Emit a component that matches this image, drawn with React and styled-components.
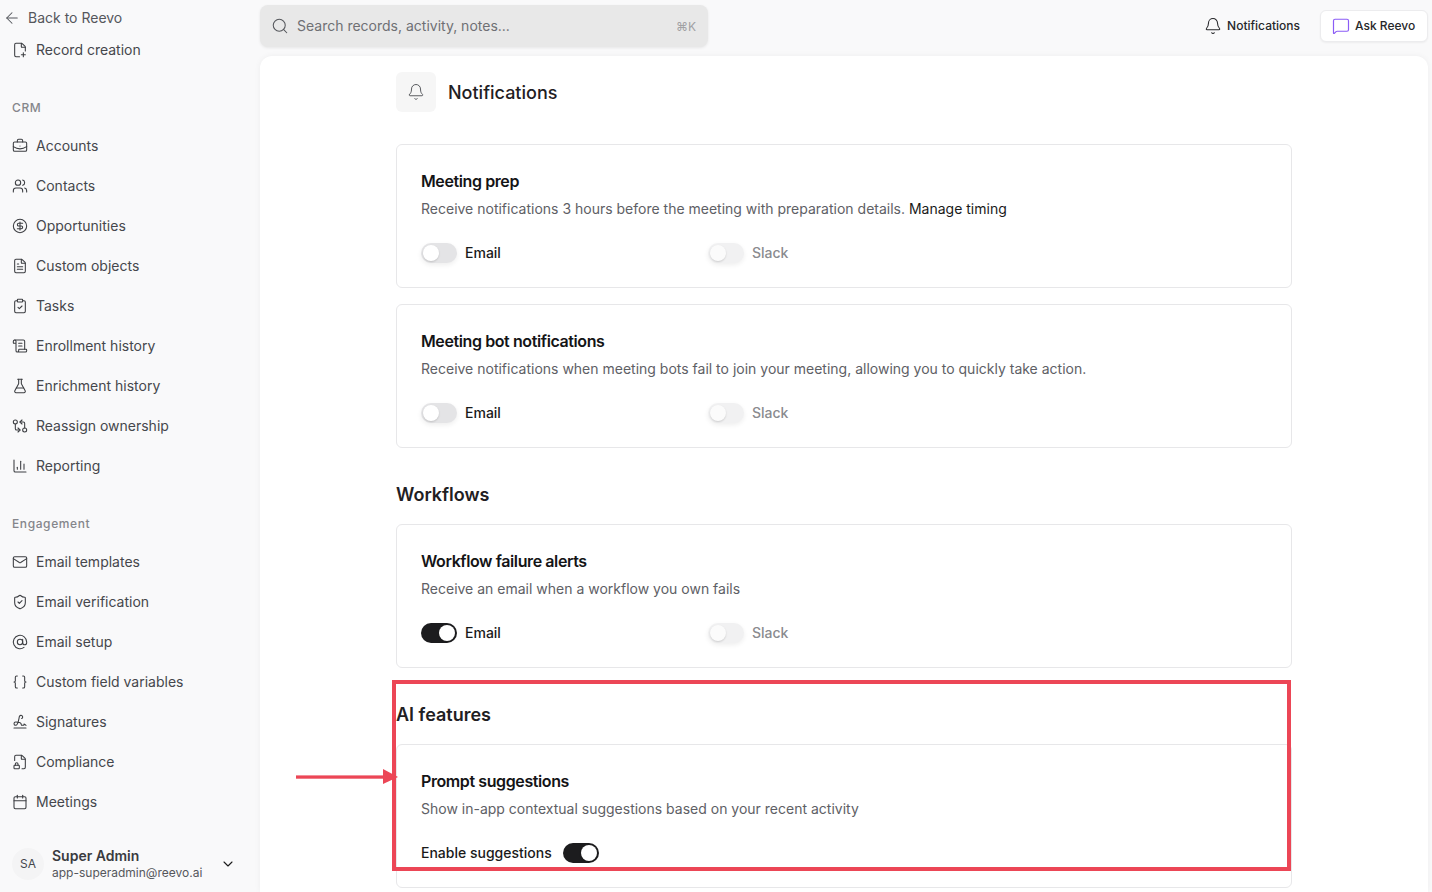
import React from "react";
import styled, { createGlobalStyle } from "styled-components";
import {
  ArrowLeft, FilePlus2, BriefcaseBusiness, Users, CircleDollarSign, FileText, ClipboardCheck,
  ScrollText, FlaskConical, GitCompareArrows, ChartColumn, Mail, ShieldCheck, AtSign, Braces,
  Signature, FileLock2, Calendar, ChevronDown, Search, Bell, MessageSquare,
} from "lucide-react";

const Global = createGlobalStyle`
  html, body { margin: 0; padding: 0; height: 100%; overflow: hidden; background: #f9f9fa; }
  body { font-family: Inter, "Noto Sans", sans-serif; color: #1a1a1a; -webkit-font-smoothing: antialiased; }
  * { box-sizing: border-box; }
`;

const Page = styled.div`
  position: relative;
  display: grid;
  grid-template-columns: 260px 1fr;
  width: 1432px;
  height: 892px;
  overflow: hidden;
`;

const Sidebar = styled.aside`
  display: flex;
  flex-direction: column;
  padding-top: 8px;
`;

/* Raises a label 1px above the optical centre of its row, as the font sits in the reference. */
const Label = styled.span`
  margin-bottom: 2px;
`;

const BackLink = styled.div`
  display: flex;
  align-items: center;
  gap: 7px;
  height: 20px;
  margin-bottom: 2px;
  padding-left: 3px;
  font-size: 14px;
  color: #55575c;
  svg { flex: none; }
`;

const NavItem = styled.div`
  display: flex;
  align-items: center;
  gap: 8px;
  height: 40px;
  padding-left: 12px;
  font-size: 14px;
  color: #45474c;
  svg { flex: none; color: #3c3e42; }
`;

const SectionLabel = styled.div`
  height: 20px;
  margin: 28px 0 8px;
  padding-left: 12px;
  font-size: 12px;
  line-height: 20px;
  font-weight: 500;
  letter-spacing: 0.6px;
  color: #85868b;
`;

const UserRow = styled.div`
  display: flex;
  align-items: center;
  gap: 8px;
  height: 32px;
  margin-top: 26px;
  padding: 0 24px 0 12px;
`;

const Avatar = styled.div`
  display: flex;
  align-items: center;
  justify-content: center;
  flex: none;
  width: 32px;
  height: 32px;
  padding-bottom: 1px;
  border-radius: 50%;
  background: #f4f4f5;
  font-size: 12px;
  color: #45474c;
`;

const UserText = styled.div`
  flex: 1;
  min-width: 0;
`;

const UserName = styled.div`
  font-size: 14px;
  line-height: 17px;
  font-weight: 600;
  color: #3a3b3f;
`;

const UserEmail = styled.div`
  font-size: 12px;
  line-height: 17px;
  color: #55575c;
`;

const Main = styled.div`
  display: flex;
  flex-direction: column;
  min-width: 0;
  height: 892px;
`;

const Header = styled.header`
  display: flex;
  align-items: center;
  justify-content: space-between;
  flex: none;
  height: 52px;
  padding-right: 4px;
`;

const SearchBox = styled.div`
  display: flex;
  align-items: center;
  gap: 8px;
  width: 448px;
  height: 42px;
  padding: 0 12px 0 11px;
  border-radius: 8px;
  background: #e8e8e8;
  box-shadow: 0 1px 3px rgba(0, 0, 0, 0.08);
  font-size: 14px;
  color: #6f7074;
  svg { color: #55575c; flex: none; }
`;

const SearchText = styled.span`
  flex: 1;
  margin-bottom: 2px;
`;

const Kbd = styled.span`
  font-size: 12px;
  color: #a0a0a3;
`;

const HeaderActions = styled.div`
  display: flex;
  align-items: center;
  gap: 20px;
`;

const BellAction = styled.div`
  display: flex;
  align-items: center;
  gap: 5px;
  font-size: 12px;
  font-weight: 500;
  color: #26272a;
`;

const AskButton = styled.button`
  display: flex;
  align-items: center;
  gap: 5px;
  width: 108px;
  height: 32px;
  padding: 0 0 0 11px;
  border: 1px solid #ececee;
  border-radius: 6px;
  background: #fff;
  box-shadow: 0 1px 2px rgba(0, 0, 0, 0.05);
  font: 500 12px Inter, sans-serif;
  color: #26272a;
  svg { color: #8b5cf6; flex: none; }
`;

const Panel = styled.main`
  flex: 1;
  min-height: 0;
  margin: 4px 4px 0 0;
  padding-top: 16px;
  overflow: hidden;
  border-radius: 12px 12px 0 0;
  background: #fff;
  box-shadow: 0 0 6px rgba(0, 0, 0, 0.05);
`;

const Content = styled.div`
  width: 896px;
  margin: 0 auto;
`;

const TitleRow = styled.div`
  display: flex;
  align-items: center;
  gap: 12px;
  height: 40px;
  margin-bottom: 32px;
`;

const TitleIcon = styled.div`
  display: flex;
  align-items: center;
  justify-content: center;
  width: 40px;
  height: 40px;
  border-radius: 6px;
  background: #f6f6f6;
  svg { color: #55575c; }
`;

const PageTitle = styled.h1`
  margin: 0;
  font-size: 18px;
  line-height: 41px;
  font-weight: 500;
  color: #1f2023;
`;

const SectionTitle = styled.h2`
  margin: 32px 0 16px;
  height: 28px;
  font-size: 18px;
  line-height: 29px;
  font-weight: 600;
  color: #1f2023;
`;

const Stack = styled.div`
  display: flex;
  flex-direction: column;
  gap: 16px;
`;

const Card = styled.section`
  height: 144px;
  padding: 24px;
  border: 1px solid #e7e7e9;
  border-radius: 6px;
  background: #fff;
`;

const CardTitle = styled.h3`
  margin: 0;
  font-size: 16px;
  line-height: 24px;
  font-weight: 600;
  letter-spacing: -0.4px;
  color: #141416;
`;

const CardDesc = styled.p`
  margin: 6px 0 24px;
  font-size: 14px;
  line-height: 20px;
  color: #5e6065;
`;

const DescLink = styled.span`
  color: #1a1a1a;
`;

const ToggleRow = styled.div`
  display: grid;
  grid-template-columns: 287px 287px;
`;

const ToggleField = styled.label`
  display: flex;
  align-items: center;
  gap: 8px;
  height: 20px;
  font-size: 14px;
  font-weight: 500;
  color: ${(p) => (p.$disabled ? "#8a8b8f" : "#1a1a1a")};
`;

const InlineField = styled.label`
  display: flex;
  align-items: center;
  gap: 11px;
  height: 20px;
  font-size: 14px;
  font-weight: 500;
  color: #1a1a1a;
`;

const Track = styled.span`
  position: relative;
  display: block;
  flex: none;
  width: 36px;
  height: 20px;
  border-radius: 10px;
  background: ${(p) => (p.$on ? "#1c1c1e" : p.$disabled ? "#f1f1f2" : "#e4e4e6")};
  box-shadow: ${(p) => (p.$on ? "none" : "0 2px 5px rgba(0,0,0,0.07)")};
`;

const Knob = styled.span`
  position: absolute;
  top: 2px;
  left: ${(p) => (p.$on ? "18px" : "2px")};
  width: 16px;
  height: 16px;
  border-radius: 50%;
  background: ${(p) => (p.$disabled ? "#fbfbfb" : "#fff")};
  box-shadow: 0 1px 2px rgba(0, 0, 0, 0.15);
`;

const Highlight = styled.div`
  position: absolute;
  left: 392px;
  top: 680px;
  width: 899px;
  height: 191px;
  border: 4px solid #ec4656;
  pointer-events: none;
`;

const ArrowMark = styled.svg`
  position: absolute;
  left: 296px;
  top: 768px;
  width: 102px;
  height: 18px;
  pointer-events: none;
`;

const Toggle = ({ on, disabled }) => (
  <Track $on={on} $disabled={disabled}>
    <Knob $on={on} $disabled={disabled} />
  </Track>
);

const Channels = ({ email }) => (
  <ToggleRow>
    <ToggleField>
      <Toggle on={email} />
      <Label>Email</Label>
    </ToggleField>
    <ToggleField $disabled>
      <Toggle disabled />
      <Label>Slack</Label>
    </ToggleField>
  </ToggleRow>
);

const crm = [
  [BriefcaseBusiness, "Accounts"],
  [Users, "Contacts"],
  [CircleDollarSign, "Opportunities"],
  [FileText, "Custom objects"],
  [ClipboardCheck, "Tasks"],
  [ScrollText, "Enrollment history"],
  [FlaskConical, "Enrichment history"],
  [GitCompareArrows, "Reassign ownership"],
  [ChartColumn, "Reporting"],
];

const engagement = [
  [Mail, "Email templates"],
  [ShieldCheck, "Email verification"],
  [AtSign, "Email setup"],
  [Braces, "Custom field variables"],
  [Signature, "Signatures"],
  [FileLock2, "Compliance"],
  [Calendar, "Meetings"],
];

const NavList = ({ items }) =>
  items.map(([Icon, label]) => (
    <NavItem key={label}>
      <Icon size={16} strokeWidth={1.6} />
      <Label>{label}</Label>
    </NavItem>
  ));

export default function App() {
  return (
    <Page>
      <Global />
      <Sidebar>
        <BackLink>
          <ArrowLeft size={18} strokeWidth={1.4} />
          <Label>Back to Reevo</Label>
        </BackLink>
        <NavItem>
          <FilePlus2 size={16} strokeWidth={1.6} />
          <Label>Record creation</Label>
        </NavItem>
        <SectionLabel>CRM</SectionLabel>
        <NavList items={crm} />
        <SectionLabel>Engagement</SectionLabel>
        <NavList items={engagement} />
        <UserRow>
          <Avatar>SA</Avatar>
          <UserText>
            <UserName>Super Admin</UserName>
            <UserEmail>app-superadmin@reevo.ai</UserEmail>
          </UserText>
          <ChevronDown size={16} strokeWidth={1.6} />
        </UserRow>
      </Sidebar>
      <Main>
        <Header>
          <SearchBox>
            <Search size={18} strokeWidth={1.4} />
            <SearchText>Search records, activity, notes...</SearchText>
            <Kbd>⌘K</Kbd>
          </SearchBox>
          <HeaderActions>
            <BellAction>
              <Bell size={18} strokeWidth={1.4} />
              <Label>Notifications</Label>
            </BellAction>
            <AskButton>
              <MessageSquare size={18} strokeWidth={1.6} />
              <Label>Ask Reevo</Label>
            </AskButton>
          </HeaderActions>
        </Header>
        <Panel>
          <Content>
            <TitleRow>
              <TitleIcon>
                <Bell size={18} strokeWidth={1.3} />
              </TitleIcon>
              <PageTitle>Notifications</PageTitle>
            </TitleRow>
            <Stack>
              <Card>
                <CardTitle>Meeting prep</CardTitle>
                <CardDesc>
                  Receive notifications 3 hours before the meeting with preparation details.{" "}
                  <DescLink>Manage timing</DescLink>
                </CardDesc>
                <Channels />
              </Card>
              <Card>
                <CardTitle>Meeting bot notifications</CardTitle>
                <CardDesc>
                  Receive notifications when meeting bots fail to join your meeting, allowing you to quickly take action.
                </CardDesc>
                <Channels />
              </Card>
            </Stack>
            <SectionTitle>Workflows</SectionTitle>
            <Card>
              <CardTitle>Workflow failure alerts</CardTitle>
              <CardDesc>Receive an email when a workflow you own fails</CardDesc>
              <Channels email />
            </Card>
            <SectionTitle>AI features</SectionTitle>
            <Card>
              <CardTitle>Prompt suggestions</CardTitle>
              <CardDesc>Show in-app contextual suggestions based on your recent activity</CardDesc>
              <InlineField>
                <Label>Enable suggestions</Label>
                <Toggle on />
              </InlineField>
            </Card>
          </Content>
        </Panel>
      </Main>
      <Highlight />
      <ArrowMark viewBox="0 0 102 18">
        <rect x="0" y="7.4" width="90" height="3.3" fill="#ec4656" />
        <polygon points="87,1 102,9 87,16" fill="#ec4656" />
      </ArrowMark>
    </Page>
  );
}
